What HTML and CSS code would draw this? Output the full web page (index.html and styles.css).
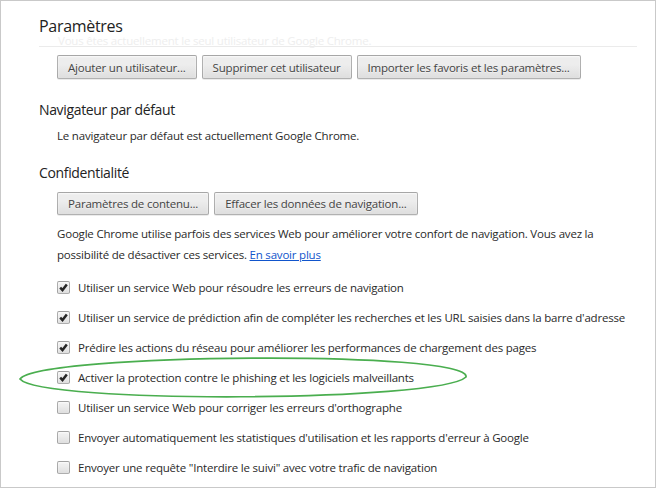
FILE: index.html
```html
<!DOCTYPE html>
<html lang="fr">
<head>
    <meta charset="UTF-8">
    <title>Paramètres</title>
    <link rel="stylesheet" href="styles.css">
</head>
<body>
    <div class="frame">
        <header class="page-header">
            <h1>Paramètres</h1>
            <p class="faded">Vous êtes actuellement le seul utilisateur de Google Chrome.</p>
        </header>

        <div class="section-body">
            <div class="btn-row">
                <button>Ajouter un utilisateur...</button>
                <button>Supprimer cet utilisateur</button>
                <button>Importer les favoris et les paramètres...</button>
            </div>
        </div>

        <section class="section">
            <h3>Navigateur par défaut</h3>
            <div class="section-body">
                <p class="line">Le navigateur par défaut est actuellement Google Chrome.</p>
            </div>
        </section>

        <section class="section">
            <h3>Confidentialité</h3>
            <div class="section-body">
                <div class="btn-row btn-row-tight">
                    <button>Paramètres de contenu...</button>
                    <button>Effacer les données de navigation...</button>
                </div>
                <p class="note">Google Chrome utilise parfois des services Web pour améliorer votre confort de navigation. Vous avez la<br>possibilité de désactiver ces services. <a href="#">En savoir plus</a></p>

                <ul class="checks">
                    <li><span class="box checked"><svg viewBox="0 0 11 11"><path d="M2.2 5.6 L4.5 8 L8.8 2.4"/></svg></span>Utiliser un service Web pour résoudre les erreurs de navigation</li>
                    <li><span class="box checked"><svg viewBox="0 0 11 11"><path d="M2.2 5.6 L4.5 8 L8.8 2.4"/></svg></span>Utiliser un service de prédiction afin de compléter les recherches et les URL saisies dans la barre d'adresse</li>
                    <li><span class="box checked"><svg viewBox="0 0 11 11"><path d="M2.2 5.6 L4.5 8 L8.8 2.4"/></svg></span>Prédire les actions du réseau pour améliorer les performances de chargement des pages</li>
                    <li><span class="box checked"><svg viewBox="0 0 11 11"><path d="M2.2 5.6 L4.5 8 L8.8 2.4"/></svg></span>Activer la protection contre le phishing et les logiciels malveillants</li>
                    <li><span class="box"></span>Utiliser un service Web pour corriger les erreurs d'orthographe</li>
                    <li><span class="box"></span>Envoyer automatiquement les statistiques d'utilisation et les rapports d'erreur à Google</li>
                    <li><span class="box"></span>Envoyer une requête "Interdire le suivi" avec votre trafic de navigation</li>
                </ul>
            </div>
        </section>

        <!-- hand drawn highlight around the phishing option -->
        <svg class="annotation" viewBox="0 0 658 488">
            <path d="M20 379 C 40 353, 472 350, 466 377 C 440 402, 40 404, 20 379 Z"/>
        </svg>
    </div>
</body>
</html>
```

FILE: styles.css
```css
body {
    margin: 0;
    background: #fff;
    font-family: "Open Sans", "Liberation Sans", sans-serif;
    font-size: 11.5px;
    letter-spacing: -0.2px;
    color: #2a2a2a;
}
.frame {
    position: relative;
    width: 656px;
    height: 488px;
    box-sizing: border-box;
    border: 1px solid #c9c9c9;
    overflow: hidden;
}
.page-header {
    margin: 0 18px 0 38px;
    padding-top: 15px;
    border-bottom: 1px solid #ebebeb;
}
h1 {
    margin: 0;
    font-size: 16px;
    font-weight: normal;
    line-height: 20px;
    letter-spacing: -0.3px;
    color: #222;
}
.faded {
    margin: 0 0 0 19px;
    height: 10px;
    line-height: 10px;
    color: #eeeeee;
    white-space: nowrap;
}
.section-body {
    padding-left: 56px;
}
.btn-row {
    display: flex;
    gap: 5px;
    margin-top: 8px;
}
.btn-row-tight {
    margin-top: 9px;
}
button {
    height: 24px;
    padding: 0 10px;
    font-family: inherit;
    font-size: 11.5px;
    letter-spacing: -0.2px;
    color: #444;
    border: 1px solid rgba(0, 0, 0, 0.25);
    border-radius: 2px;
    background-image: linear-gradient(#ededed, #ededed 38%, #dedede);
    box-shadow: 0 1px 0 rgba(0, 0, 0, 0.08), inset 0 1px 2px rgba(255, 255, 255, 0.75);
    text-shadow: 0 1px 0 #f0f0f0;
}
.btn-row-tight button {
    height: 23px;
}
.section h3 {
    margin: 21px 0 0 38px;
    font-size: 14px;
    font-weight: normal;
    line-height: 20px;
    letter-spacing: -0.35px;
    color: #222;
}
.section + .section h3 {
    margin-top: 17px;
}
.line {
    margin: 6px 0 0;
    line-height: 20px;
}
.note {
    margin: 8px 0 0;
    line-height: 21px;
    white-space: nowrap;
}
.note a {
    color: #15c;
}
.checks {
    list-style: none;
    margin: 7px 0 0;
    padding: 0;
}
.checks li {
    display: flex;
    align-items: center;
    gap: 8px;
    height: 30px;
    white-space: nowrap;
}
.box {
    flex: none;
    width: 13px;
    height: 13px;
    box-sizing: border-box;
    border: 1px solid rgba(0, 0, 0, 0.28);
    border-radius: 2px;
    background-image: linear-gradient(#f2f2f2, #ededed 38%, #dedede);
    box-shadow: inset 0 1px 2px rgba(255, 255, 255, 0.75);
}
.box svg {
    display: block;
    width: 11px;
    height: 11px;
}
.box path {
    fill: none;
    stroke: #262626;
    stroke-width: 2.5;
}
.annotation {
    position: absolute;
    left: -1px;
    top: -1px;
    width: 658px;
    height: 488px;
    pointer-events: none;
}
.annotation path {
    fill: none;
    stroke: #4aae4f;
    stroke-width: 1.7;
}
```
